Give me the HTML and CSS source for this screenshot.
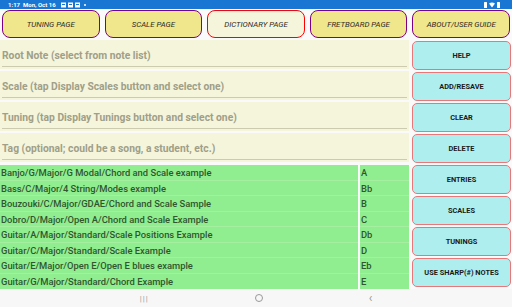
FILE: index.html
```html
<!doctype html>
<html lang="en">

<head>
    <meta charset="UTF-8" />
    <meta name="viewport" content="width=device-width, initial-scale=1.0" />
    <title>Dictionary Page</title>
    <link rel="stylesheet" href="styles.css">
</head>

<body>
    <div class="status">
        <span class="clock">1:17&nbsp; Mon, Oct 16</span>
        <span class="note-icons">
            <svg width="20" height="6" viewBox="0 0 20 6">
                <rect x="0" y="0.5" width="5" height="5" fill="#fff" />
                <rect x="7" y="0.5" width="5" height="5" fill="#fff" />
                <rect x="14" y="0.5" width="5" height="5" fill="#fff" />
                <rect x="1" y="2" width="3" height="1" fill="#1976d2" />
                <rect x="8" y="2" width="3" height="1" fill="#1976d2" />
                <rect x="15" y="2" width="3" height="1" fill="#1976d2" />
            </svg>
            <span class="dot"></span>
        </span>
        <span class="sys-icons">
            <svg width="16" height="6" viewBox="0 0 16 6">
                <rect x="0" y="0" width="3" height="6" rx="0.5" fill="#fff" />
                <path d="M5 1.5 Q8 -0.5 11 1.5 L8 5.5 Z" fill="#fff" />
                <rect x="13" y="0" width="3" height="6" rx="0.5" fill="#fff" />
            </svg>
        </span>
    </div>

    <div class="tabs">
        <div class="tab">TUNING PAGE</div>
        <div class="tab">SCALE PAGE</div>
        <div class="tab current">DICTIONARY PAGE</div>
        <div class="tab">FRETBOARD PAGE</div>
        <div class="tab">ABOUT/USER GUIDE</div>
    </div>

    <div class="main">
        <div class="left">
            <div class="field"><span>Root Note (select from note list)</span></div>
            <div class="field"><span>Scale (tap Display Scales button and select one)</span></div>
            <div class="field"><span>Tuning (tap Display Tunings button and select one)</span></div>
            <div class="field"><span>Tag (optional; could be a song, a student, etc.)</span></div>

            <div class="lists">
                <ul class="entries">
                    <li>Banjo/G/Major/G Modal/Chord and Scale example</li>
                    <li>Bass/C/Major/4 String/Modes example</li>
                    <li>Bouzouki/C/Major/GDAE/Chord and Scale Sample</li>
                    <li>Dobro/D/Major/Open A/Chord and Scale Example</li>
                    <li>Guitar/A/Major/Standard/Scale Positions Example</li>
                    <li>Guitar/C/Major/Standard/Scale Example</li>
                    <li>Guitar/E/Major/Open E/Open E blues example</li>
                    <li>Guitar/G/Major/Standard/Chord Example</li>
                </ul>
                <ul class="notes">
                    <li>A</li>
                    <li>Bb</li>
                    <li>B</li>
                    <li>C</li>
                    <li>Db</li>
                    <li>D</li>
                    <li>Eb</li>
                    <li>E</li>
                </ul>
            </div>
        </div>

        <div class="actions">
            <button>HELP</button>
            <button>ADD/RESAVE</button>
            <button>CLEAR</button>
            <button>DELETE</button>
            <button>ENTRIES</button>
            <button>SCALES</button>
            <button>TUNINGS</button>
            <button>USE SHARP(#) NOTES</button>
        </div>
    </div>

    <div class="navbar">
        <span class="nav-recent">|||</span>
        <span class="nav-home"></span>
        <span class="nav-back">&lsaquo;</span>
    </div>
</body>

</html>
```

FILE: styles.css
```css
body {
    margin: 0;
    width: 512px;
    height: 307px;
    overflow: hidden;
    background: #fafafa;
    font-family: Roboto, "Liberation Sans", sans-serif;
}

.status {
    height: 9px;
    background: #1976d2;
    color: #fff;
    display: flex;
    align-items: center;
    padding: 0 8px;
    font-size: 6px;
    font-weight: bold;
}

.note-icons {
    display: flex;
    align-items: center;
    margin-left: 5px;
    gap: 3px;
}

.dot {
    width: 2px;
    height: 2px;
    border-radius: 50%;
    background: #fff;
}

.sys-icons {
    margin-left: auto;
    margin-right: 4px;
    display: flex;
}

.tabs {
    display: flex;
    gap: 5px;
    padding: 1px 2px 0 2px;
    height: 28px;
}

.tab {
    flex: 1;
    display: flex;
    align-items: center;
    justify-content: center;
    background: #f0e68c;
    border: 1.5px solid #800080;
    border-radius: 8px;
    font-size: 7.8px;
    font-style: italic;
    color: #2a2a2a;
}

.tab.current {
    background: #f5f5dc;
    border-color: #ff0000;
}

.main {
    display: flex;
    gap: 3px;
    margin-top: 2px;
}

.left {
    width: 409px;
    display: flex;
    flex-direction: column;
    gap: 2px;
}

.field {
    height: 29px;
    background: #f5f5dc;
    padding: 0 2px;
    display: flex;
}

.field span {
    flex: 1;
    display: flex;
    align-items: center;
    padding-top: 4px;
    border-bottom: 1.5px solid #cdcbaf;
    margin-bottom: 2px;
    font-size: 10.3px;
    font-weight: bold;
    color: #a09f88;
}

.lists {
    display: flex;
    gap: 2px;
    margin-top: 1px;
}

.lists ul {
    margin: 0;
    padding: 0;
    list-style: none;
    background: #90ee90;
}

.entries {
    width: 358px;
}

.notes {
    flex: 1;
}

.lists li {
    height: 15.5px;
    line-height: 15.5px;
    box-sizing: border-box;
    border-bottom: 1px solid #a4f0a0;
    font-size: 9.4px;
    font-weight: 500;
    color: #30552f;
    padding-left: 1px;
    white-space: nowrap;
}

.lists li:last-child {
    border-bottom: none;
}

.actions {
    width: 99px;
    display: flex;
    flex-direction: column;
    gap: 2px;
    padding-top: 1px;
}

.actions button {
    height: 29px;
    background: #afeeee;
    border: 1px solid #e8777a;
    border-radius: 5px;
    font-family: Roboto, "Liberation Sans", sans-serif;
    font-size: 7.4px;
    font-weight: bold;
    color: #1a1a1a;
    padding: 0;
}

.navbar {
    position: absolute;
    left: 0;
    top: 289px;
    width: 512px;
    height: 18px;
    background: #f7f7f7;
    display: flex;
    align-items: center;
    justify-content: center;
    gap: 106px;
    color: #999;
    font-size: 8px;
}

.nav-recent {
    letter-spacing: 1px;
}

.nav-home {
    width: 6px;
    height: 6px;
    border: 1px solid #999;
    border-radius: 50%;
}

.nav-back {
    font-size: 12px;
}
```
